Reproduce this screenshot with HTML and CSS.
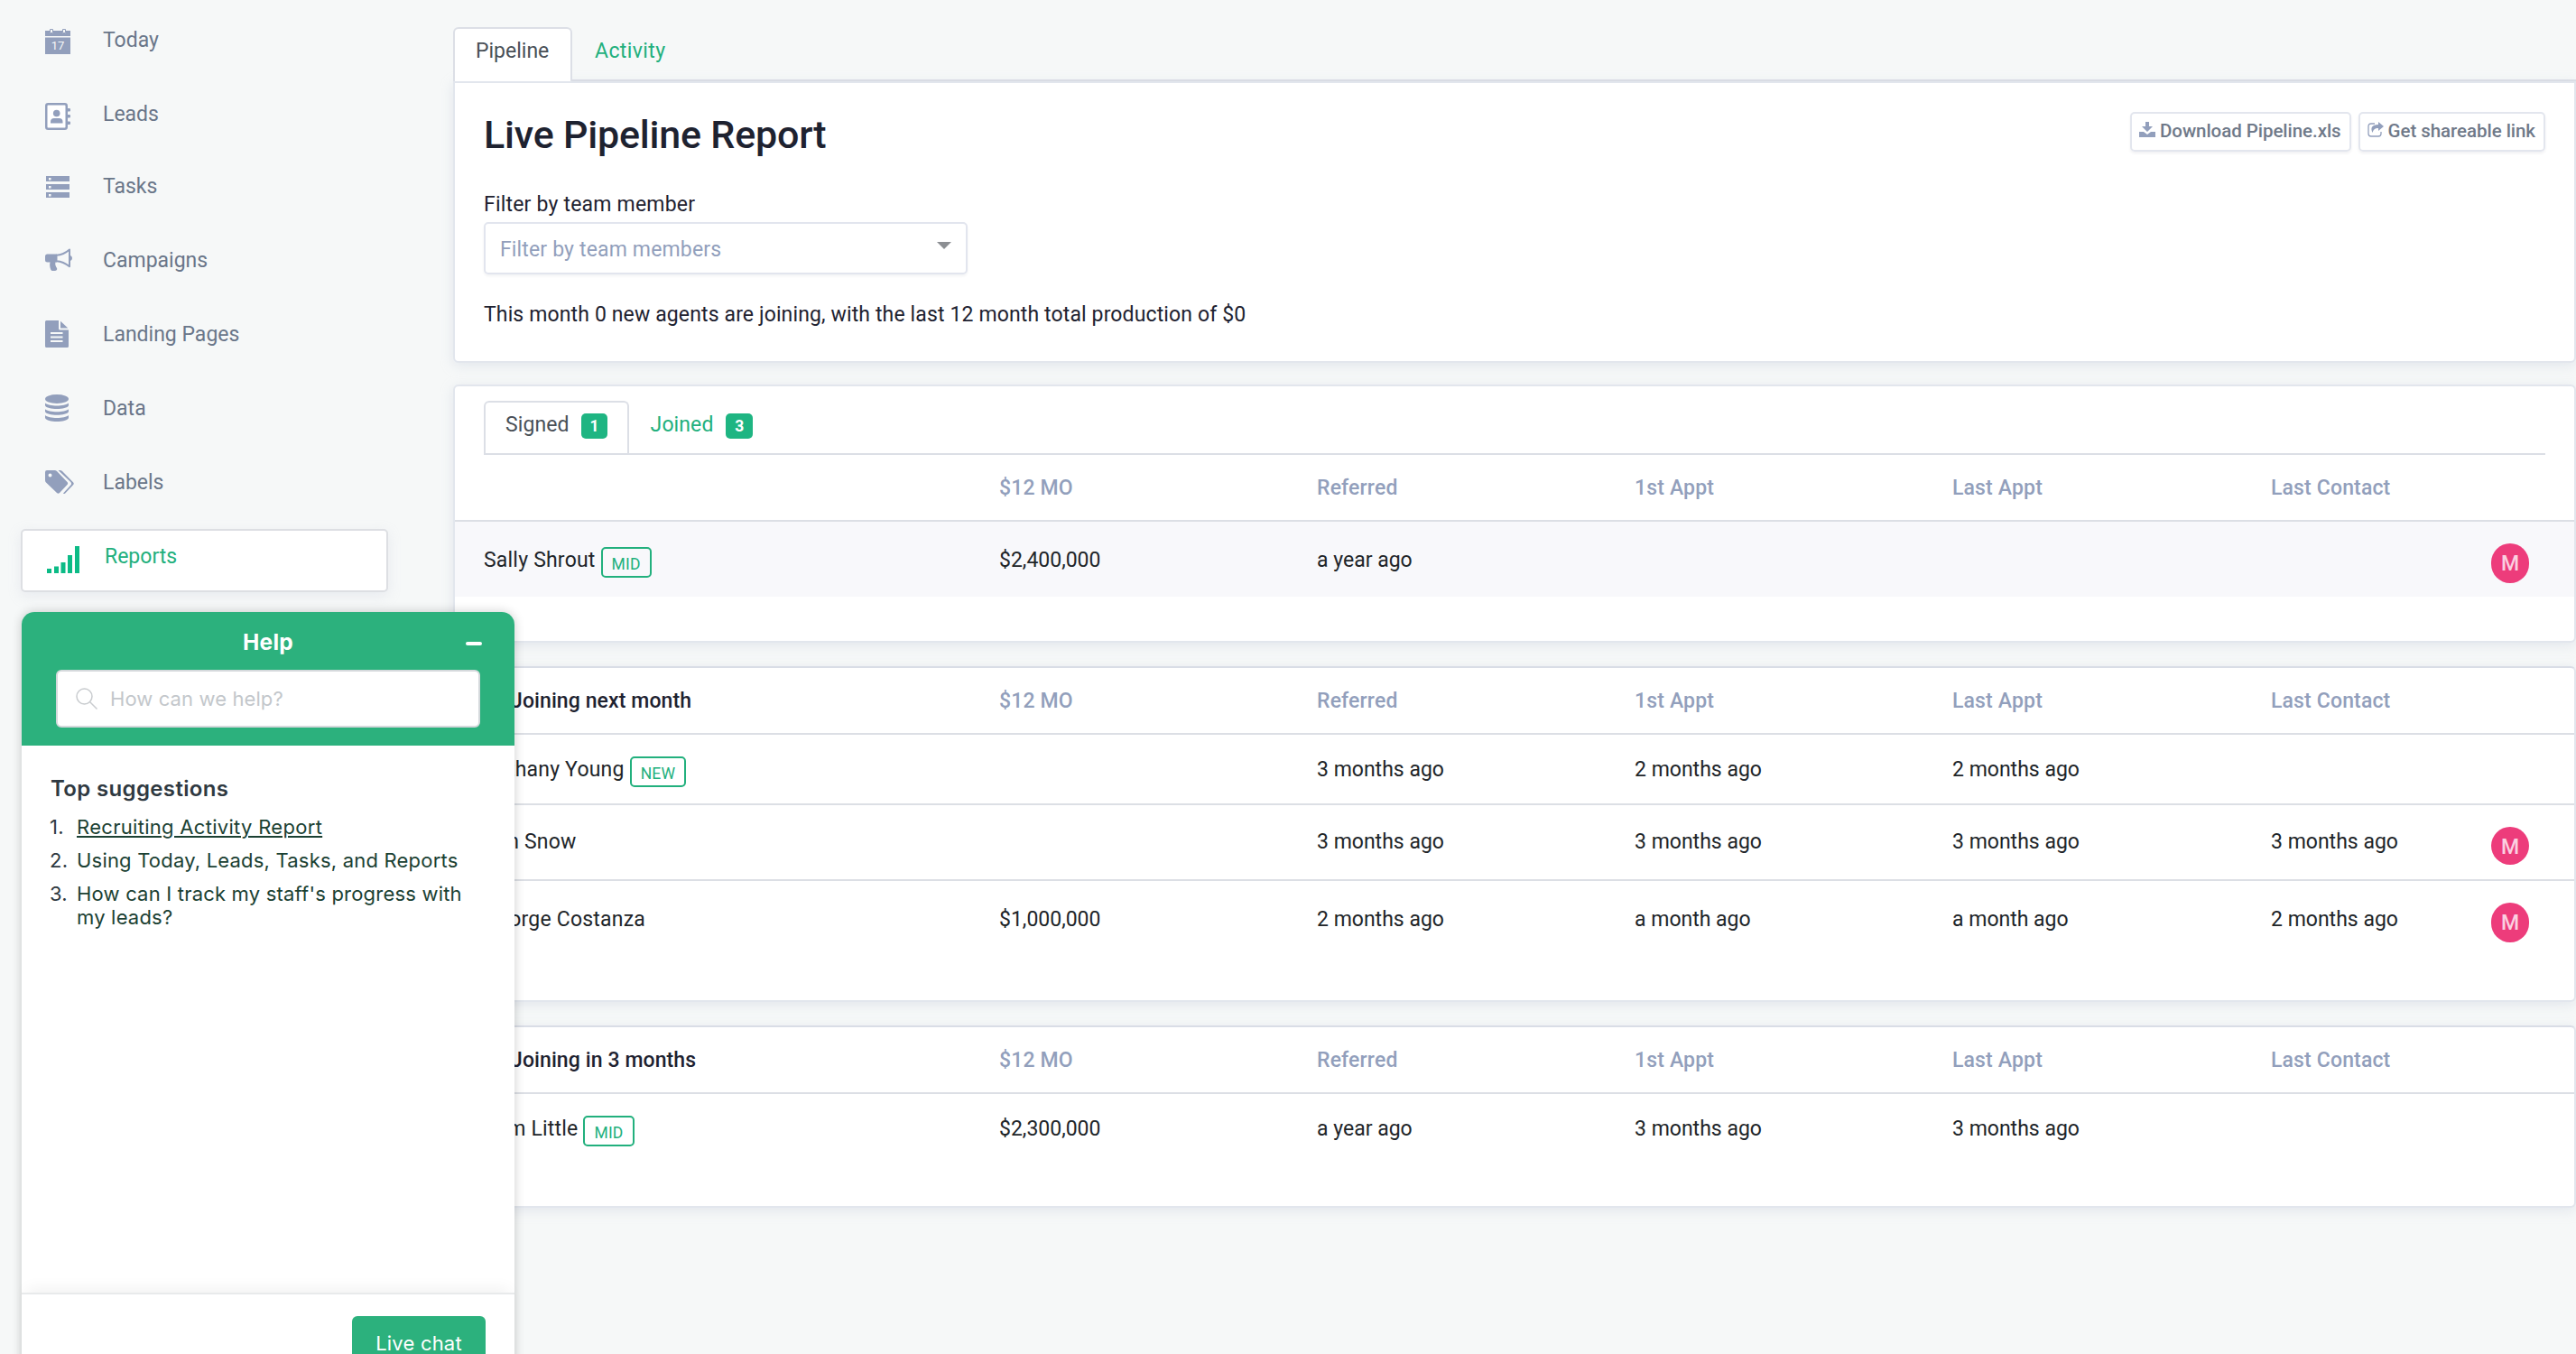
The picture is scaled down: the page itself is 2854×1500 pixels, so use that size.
FILE: index.html
```html
<!DOCTYPE html>
<html lang="en">
<head>
<meta charset="UTF-8">
<meta name="viewport" content="width=device-width, initial-scale=1.0">
<title>Live Pipeline Report</title>
<link rel="stylesheet" href="styles.css">
</head>
<body>
<nav class="sidebar">
    <a class="nav-item today">
        <span class="nav-icon"><svg width="28" height="28" viewBox="0 0 28 28"><path d="M0 2h5v3h4V2h10v3h4V2h5v6H0z"/><path d="M5.500 0.500h3v4h-3zM19.500 0.500h3v4h-3z" fill="none" stroke="#929fbc" stroke-width="1"/><path d="M0 9.500h28V28H0z"/><text x="14" y="23" class="day">17</text></svg></span>
        <span>Today</span>
    </a>
    <a class="nav-item leads">
        <span class="nav-icon"><svg width="28" height="30" viewBox="0 0 28 30"><rect x="1.250" y="1.250" width="22.500" height="27.500" rx="2" fill="#fff" stroke="#929fbc" stroke-width="2.500"/><circle cx="12.700" cy="11.500" r="3.800"/><path d="M6 22.500v-1.500q0-4 4-4h5.500q4 0 4 4v1.500zM25 6h2q1 0 1 1v1.500q0 1-1 1h-2zM25 13h2q1 0 1 1v1.500q0 1-1 1h-2zM25 20.500h2q1 0 1 1V23q0 1-1 1h-2z"/></svg></span>
        <span>Leads</span>
    </a>
    <a class="nav-item">
        <span class="nav-icon"><svg class="inset" width="26" height="24" viewBox="0 0 26 24"><path fill-rule="evenodd" d="M0 0h26v6H0zM3 2v2.500h2.500V2zM0 9h26v6H0zM3 11v2.500h2.500V11zM0 18h26v6H0zM3 20v2.500h2.500V20z"/></svg></span>
        <span>Tasks</span>
    </a>
    <a class="nav-item">
        <span class="nav-icon up"><svg width="30" height="26" viewBox="0 0 30 26"><path d="M2.500 6.500H13v9h-1.500c-.8 2.300.2 4.500 1.500 6.500.8 1.300-.3 3-2.300 3H8.500c-1.300 0-2-.6-2.500-2-.8-2.500-1.200-5-.5-7.500h-3Q0 15.500 0 13V9q0-2.500 2.500-2.500z"/><path d="M12.500 7.800C18 7.500 22.500 5.500 27 1.500v18.800c-4.500-3.800-9-5.800-14.500-6.100z" fill="none" stroke="#929fbc" stroke-width="2" stroke-linejoin="round"/><path d="M28 8q2 1 2 3t-2 3z"/></svg></span>
        <span>Campaigns</span>
    </a>
    <a class="nav-item">
        <span class="nav-icon up"><svg width="26" height="30" viewBox="0 0 26 30"><path fill-rule="evenodd" d="M1.500 0H15v9q0 1.500 1.500 1.500H26v18q0 1.500-1.500 1.500h-23Q0 30 0 28.500v-27Q0 0 1.500 0zM6 13v2h13.500v-2zM6 17.500v2h13.500v-2zM6 22v2h13.500v-2z"/><path d="M17 0.800L25.300 8.500H17z"/></svg></span>
        <span>Landing Pages</span>
    </a>
    <a class="nav-item">
        <span class="nav-icon up"><svg width="26" height="30" viewBox="0 0 26 30"><ellipse cx="13" cy="5" rx="13" ry="5"/><path d="M0 9.500c4 4 22 4 26 0v2.800c-2 5-24 5-26 0zM0 16.200c4 4 22 4 26 0V19c-2 5-24 5-26 0zM0 22.900c4 4 22 4 26 0v3c-2 5.400-24 5.400-26 0z"/></svg></span>
        <span>Data</span>
    </a>
    <a class="nav-item">
        <span class="nav-icon up"><svg width="32" height="26" viewBox="0 0 32 26"><path fill-rule="evenodd" d="M2 0h8.500q1.500 0 2.500 1l11.500 12q1.300 1.500 0 3l-8.500 9q-1.500 1.300-3 0L1 13.500Q0 12.500 0 11V2Q0 0 2 0zM5.500 3.500a2 2 0 1 0 .01 4 2 2 0 1 0-.01-4z"/><path d="M14.500 0h2q1.500 0 2.500 1l12 12.300q1.500 1.500 0 3l-8.500 9q-1.300 1.300-2.500.3l8.300-9q1.600-1.800 0-3.600z"/></svg></span>
        <span>Labels</span>
    </a>
    <a class="nav-item active">
        <span class="nav-icon"><svg width="36" height="30" viewBox="0 0 36 30"><path d="M0 25h5v5H0zM8 22.500h5V30H8zM15.500 18h5v12h-5zM23 10h5v20h-5zM31 0h5v30h-5z"/></svg></span>
        <span>Reports</span>
    </a>
</nav>

<main class="content">
    <div class="tabs page-tabs">
        <a class="tab selected">Pipeline</a>
        <a class="tab">Activity</a>
    </div>

    <section class="card report">
        <div class="report-head">
            <h1>Live Pipeline Report</h1>
            <div class="actions">
                <a class="btn"><svg width="18" height="17" viewBox="0 0 18 17"><path d="M7 0h4v5h4L9 11 3 5h4z"/><path d="M0 11h5l4 3 4-3h5v6H0z"/></svg>Download Pipeline.xls</a>
                <a class="btn"><svg width="18" height="17" viewBox="0 0 18 17"><path d="M8 2H4Q1 2 1 5v8q0 3 3 3h8q3 0 3-3v-2" fill="none" stroke="#929fbc" stroke-width="1.300"/><path d="M12 0l6 5-6 5V7Q7 6.500 5.500 12 1.500 3.500 12 3z"/></svg>Get shareable link</a>
            </div>
        </div>
        <label class="filter-label">Filter by team member</label>
        <div class="select">Filter by team members<span class="caret"></span></div>
        <p class="summary">This month 0 new agents are joining, with the last 12 month total production of $0</p>
    </section>

    <section class="card signed">
        <div class="tabs">
            <a class="tab selected">Signed <span class="count">1</span></a>
            <a class="tab">Joined <span class="count">3</span></a>
        </div>
        <div class="row head">
            <span></span><span>$12 MO</span><span>Referred</span><span>1st Appt</span><span>Last Appt</span><span>Last Contact</span>
        </div>
        <div class="row tall shaded">
            <span class="name">Sally Shrout <b class="tag">MID</b></span><span>$2,400,000</span><span>a year ago</span><span></span><span></span><span></span><i class="avatar">M</i>
        </div>
    </section>

    <section class="card next-month">
        <div class="row head">
            <span class="group">Joining next month</span><span>$12 MO</span><span>Referred</span><span>1st Appt</span><span>Last Appt</span><span>Last Contact</span>
        </div>
        <div class="row">
            <span class="name">Bethany Young <b class="tag">NEW</b></span><span></span><span>3 months ago</span><span>2 months ago</span><span>2 months ago</span>
        </div>
        <div class="row mid">
            <span class="name">Jon Snow</span><span></span><span>3 months ago</span><span>3 months ago</span><span>3 months ago</span><span>3 months ago</span><i class="avatar">M</i>
        </div>
        <div class="row tall last">
            <span class="name">George Costanza</span><span>$1,000,000</span><span>2 months ago</span><span>a month ago</span><span>a month ago</span><span>2 months ago</span><i class="avatar">M</i>
        </div>
    </section>

    <section class="card three-months">
        <div class="row head">
            <span class="group">Joining in 3 months</span><span>$12 MO</span><span>Referred</span><span>1st Appt</span><span>Last Appt</span><span>Last Contact</span>
        </div>
        <div class="row last">
            <span class="name">Tom Little <b class="tag">MID</b></span><span>$2,300,000</span><span>a year ago</span><span>3 months ago</span><span>3 months ago</span>
        </div>
    </section>
</main>

<aside class="help">
    <header class="help-head">
        <h2>Help</h2>
        <span class="minimize"></span>
        <div class="search">
            <svg width="24" height="24" viewBox="0 0 24 24"><circle cx="9.500" cy="9.500" r="8.500"/><path d="M15.500 15.500l8 8"/></svg>
            <span>How can we help?</span>
        </div>
    </header>
    <div class="help-body">
        <h3>Top suggestions</h3>
        <ol>
            <li class="hover"><a>Recruiting Activity Report</a></li>
            <li><a>Using Today, Leads, Tasks, and Reports</a></li>
            <li><a>How can I track my staff's progress with my leads?</a></li>
        </ol>
    </div>
    <footer class="help-foot"><a class="chat">Live chat</a></footer>
</aside>
</body>
</html>
```

FILE: styles.css
```css
* {
    box-sizing: border-box;
}

body {
    margin: 0;
    height: 1500px;
    overflow: hidden;
    display: flex;
    background-color: #f6f8f8;
    font-family: Roboto, sans-serif;
    font-size: 23px;
    line-height: 30px;
    color: #212529;
}

h1, h2, h3, p, ol {
    margin: 0;
}

/* sidebar */
.sidebar {
    width: 502px;
    flex: none;
    padding: 4px 72px 0 23px;
    color: #6a7689;
}

.nav-item {
    display: flex;
    align-items: center;
    height: 82px;
    padding-left: 27px;
}

.nav-item.leads {
    height: 80px;
    padding-top: 2px;
}

.nav-icon {
    width: 64px;
    display: flex;
}

.nav-icon svg {
    fill: #929fbc;
}

.nav-icon .inset {
    margin-left: 1px;
}

.nav-icon.up {
    margin-top: -3px;
}

.today .nav-icon {
    margin-top: 2px;
}

.leads .nav-icon {
    margin-top: 4px;
}

.day {
    font-size: 13px;
    text-anchor: middle;
    fill: #f6f8f8;
}

.nav-item.active {
    height: 70px;
    margin-top: 10px;
    padding-bottom: 8px;
    border: 2px solid #dddfe3;
    border-radius: 5px;
    background-color: #fff;
    color: #22b07d;
    box-shadow: 0 4px 14px rgba(190, 197, 215, 0.25);
}

.nav-item.active .nav-icon {
    margin-top: 5px;
}

.nav-item.active .nav-icon svg {
    fill: #0cbb86;
}

/* main column */
.content {
    flex: 1;
    padding-top: 30px;
}

.tabs {
    display: flex;
    border-bottom: 2px solid #dcdfe6;
}

.tab {
    height: 58px;
    padding: 10px 23px 0;
    border: 2px solid transparent;
    border-bottom: 0;
    border-radius: 6px 6px 0 0;
    color: #22b07d;
}

.tab.selected {
    border-color: #dcdfe6;
    background-color: #fff;
    color: #495057;
}

.page-tabs .selected {
    height: 60px;
    margin-bottom: -2px;
    width: 132px;
    z-index: 1;
}

.page-tabs .tab:last-child {
    letter-spacing: 0.4px;
}

.card {
    border: 2px solid #e2e6ed;
    border-radius: 6px;
    background-color: #fff;
    box-shadow: 0 3px 14px rgba(190, 197, 215, 0.35);
}

.report {
    height: 312px;
    padding: 0 32px;
    border-radius: 0 0 6px 6px;
    color: #1e2230;
}

.report-head {
    display: flex;
    justify-content: space-between;
}

h1 {
    padding-top: 32px;
    font-size: 43px;
    font-weight: 500;
    line-height: 50px;
    letter-spacing: -0.2px;
}

.actions {
    display: flex;
    gap: 8px;
    padding-top: 32px;
}

.btn {
    display: flex;
    height: 44px;
    padding: 4px 9px 0 8px;
    border: 2px solid #e3e6ee;
    border-radius: 5px;
    font-size: 20.5px;
    font-weight: 500;
    letter-spacing: -0.05px;
    color: #6f7989;
    box-shadow: 0 2px 3px rgba(50, 60, 90, 0.07);
}

.btn svg {
    margin: 5px 5px 0 0;
    fill: #929fbc;
}

.filter-label {
    display: block;
    margin-top: 38px;
    letter-spacing: 0.2px;
}

.select {
    display: flex;
    justify-content: space-between;
    width: 536px;
    height: 58px;
    margin-top: 4px;
    padding: 14px 16px 0;
    border: 2px solid #e2e5ee;
    border-radius: 5px;
    color: #929fbc;
    letter-spacing: 0.15px;
    box-shadow: 0 2px 3px rgba(50, 60, 90, 0.06);
}

.caret {
    height: 8px;
    margin-top: 6px;
    border: 8px solid transparent;
    border-top-color: #8c8f93;
}

.summary {
    margin-top: 30px;
    letter-spacing: 0.13px;
}

/* tables */
.signed {
    height: 286px;
    margin-top: 24px;
}

.signed .tabs {
    margin: 16px 32px 0;
}

.signed .tab {
    padding: 10px 22px 0;
    letter-spacing: 0.1px;
}

.count {
    display: inline-block;
    height: 28px;
    margin-left: 8px;
    padding: 0 9px;
    border-radius: 5px;
    background-color: #1eb582;
    color: #fff;
    font-size: 17.5px;
    font-weight: 700;
    line-height: 28px;
}

.tab:last-child .count {
    padding: 0 10px;
}

.row {
    display: grid;
    grid-template-columns: 571px 352px 352px 352px 353px 244px 42px;
    height: 78px;
    padding: 24px 0 0 32px;
    border-bottom: 2px solid #dcdfe5;
}

.row.head {
    height: 74px;
    padding-top: 22px;
    font-weight: 500;
    letter-spacing: 0.15px;
    color: #929fbc;
}

.row.mid {
    height: 84px;
    padding-top: 26px;
}

.row.tall {
    padding-top: 28px;
}

.row.last {
    border-bottom: 0;
}

.row.shaded {
    height: 83px;
    border-bottom: 0;
    background-color: #f8f8fb;
}

.row .group {
    padding-left: 30px;
    letter-spacing: 0.1px;
    color: #1e2230;
}

.name {
    display: flex;
    align-items: flex-start;
    gap: 6px;
    letter-spacing: 0.2px;
}

.tag {
    height: 34px;
    padding: 2px 10px 0;
    border: 2px solid #22b07d;
    border-radius: 5px;
    color: #22b07d;
    font-size: 17.5px;
    font-weight: 400;
}

.avatar {
    width: 42px;
    height: 44px;
    margin-top: -4px;
    border-radius: 21px;
    background-color: #ed3c7b;
    color: #fbd0e0;
    font-style: normal;
    font-weight: 500;
    line-height: 45px;
    text-align: center;
}

.mid .avatar {
    height: 42px;
    margin-top: -2px;
}

.next-month {
    height: 372px;
    margin-top: 26px;
    border-top-color: #d9dde6;
}

.three-months {
    height: 202px;
    margin-top: 26px;
    border-top-color: #d9dde6;
}

/* help widget, floats over the page */
.help {
    position: absolute;
    left: 24px;
    top: 678px;
    width: 546px;
    height: 860px;
    display: flex;
    flex-direction: column;
    border-radius: 14px 14px 0 0;
    background-color: #fff;
    box-shadow: 0 0 12px rgba(0, 0, 0, 0.2);
    font-family: Inter, sans-serif;
    font-size: 22px;
    color: #2f3941;
    z-index: 2;
}

.help-head {
    height: 148px;
    padding: 18px 38px 0;
    border-radius: 14px 14px 0 0;
    background-color: #2cb17d;
}

h2 {
    color: #fff;
    font-size: 24.5px;
    font-weight: 700;
    line-height: 30px;
    letter-spacing: 0.3px;
    text-align: center;
}

.minimize {
    position: absolute;
    right: 36px;
    top: 33px;
    width: 18px;
    height: 4px;
    border-radius: 2px;
    background-color: #fff;
}

.search {
    display: flex;
    align-items: center;
    height: 64px;
    margin-top: 16px;
    padding-left: 20px;
    border: 2px solid #d5d9dc;
    border-radius: 6px;
    background-color: #fff;
    color: #c3c7cb;
    letter-spacing: 0.1px;
}

.search svg {
    margin-right: 14px;
    fill: none;
    stroke: #c9cccf;
    stroke-width: 1.5;
}

.help-body {
    flex: 1;
    padding: 33px 26px 0 32px;
}

h3 {
    font-size: 24px;
    font-weight: 600;
    line-height: 30px;
    letter-spacing: 0.35px;
}

ol {
    margin-top: 14px;
    padding-left: 29px;
    line-height: 26px;
    letter-spacing: 0.2px;
    list-style: none;
    counter-reset: item;
}

li {
    margin-bottom: 11px;
}

/* numbers sit further left than the browser's own markers */
li::before {
    counter-increment: item;
    content: counter(item) ".";
    float: left;
    width: 30px;
    margin-left: -30px;
}

li a {
    color: #1b4133;
}

.hover a {
    text-decoration: underline;
    letter-spacing: 0.3px;
}

.help-foot {
    display: flex;
    justify-content: flex-end;
    height: 106px;
    padding: 24px 32px 0;
    border-top: 2px solid #e8eaeb;
    box-shadow: 0 -10px 16px -6px rgba(0, 0, 0, 0.06);
}

.chat {
    width: 148px;
    height: 60px;
    border-radius: 6px;
    background-color: #2cb17d;
    color: #fff;
    letter-spacing: 0.2px;
    line-height: 61px;
    text-align: center;
}
```
